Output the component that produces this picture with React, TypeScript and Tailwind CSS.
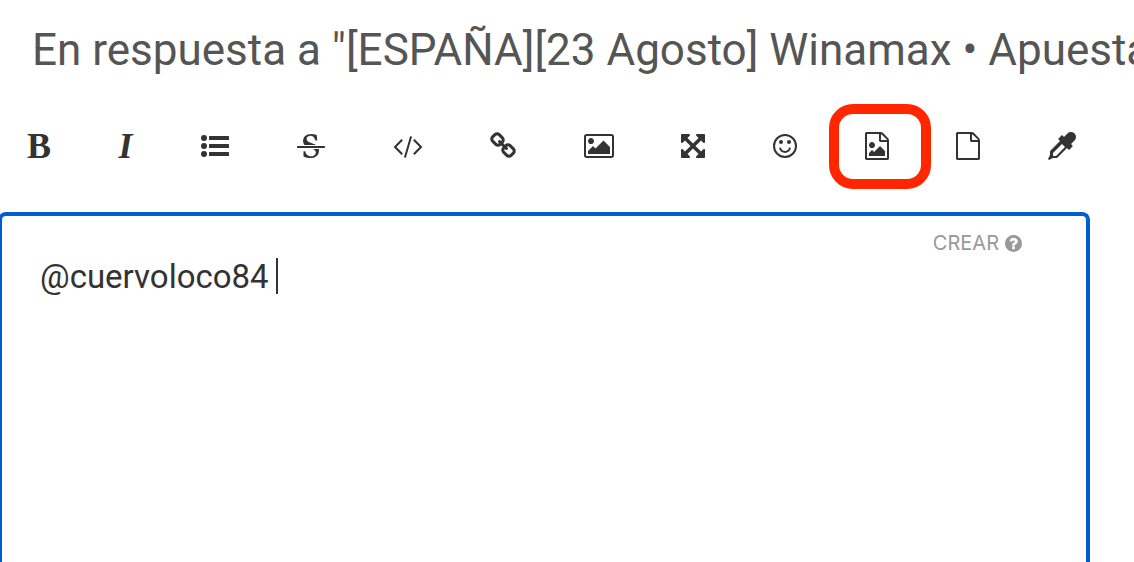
import { useState } from 'react';
import type { ReactNode } from 'react';

interface IconProps {
  viewBox: string;
  className: string;
  children: ReactNode;
}

interface Tool {
  id: string;
  label: string;
  icon: ReactNode;
  highlighted?: boolean;
}

function Icon({ viewBox, className, children }: IconProps) {
  return (
    <svg
      viewBox={viewBox}
      className={className}
      fill="currentColor"
      aria-hidden="true"
    >
      {children}
    </svg>
  );
}

const filePath =
  'M1596 380q28 28 48 76t20 88v1152q0 40-28 68t-68 28h-1344q-40 0-68-28t-28-68v-1600q0-40 28-68t68-28h896q40 0 88 20t76 48zm-444-244v376h376q-10-29-22-41l-313-313q-12-12-41-22zm384 1528v-1024h-416q-40 0-68-28t-28-68v-416h-768v1536h1280z';

const tools: Tool[] = [
  {
    id: 'bold',
    label: 'Negrita',
    icon: (
      <span className="w-[22px] flex justify-center font-bold">B</span>
    ),
  },
  {
    id: 'italic',
    label: 'Cursiva',
    icon: (
      <span className="w-4 flex justify-center font-bold italic">I</span>
    ),
  },
  {
    id: 'list',
    label: 'Lista',
    icon: (
      <Icon viewBox="0 0 28 28" className="w-7 h-7">
        <circle cx="3" cy="6" r="3" />
        <circle cx="3" cy="14" r="3" />
        <circle cx="3" cy="22" r="3" />
        <rect x="8" y="4" width="20" height="4" rx="0.5" />
        <rect x="8" y="12" width="20" height="4" rx="0.5" />
        <rect x="8" y="20" width="20" height="4" rx="0.5" />
      </Icon>
    ),
  },
  {
    id: 'strike',
    label: 'Tachado',
    icon: (
      <Icon viewBox="0 0 1792 1792" className="w-7 h-7">
        <path d="M1760 896q14 0 23 9t9 23v64q0 14-9 23t-23 9h-1728q-14 0-23-9t-9-23v-64q0-14 9-23t23-9h1728zm-1277-64q-28-35-51-80-48-97-48-188 0-181 134-309 133-127 393-127 50 0 167 19 66 12 177 48 10 38 21 118 14 123 14 183 0 18-5 45l-12 3-84-6-14-2q-50-149-103-205-88-91-210-91-114 0-182 59-67 58-67 146 0 73 66 140t279 129q69 20 173 66 58 28 95 52h-743zm507 256h411q7 39 7 92 0 111-41 212-23 55-71 104-37 35-109 81-80 48-153 66-80 21-203 21-114 0-195-23l-140-40q-57-16-72-28-8-8-8-22v-13q0-108-2-156-1-30 0-68l2-37v-44l102-2q15 34 30 71t22.5 56 12.5 27q35 57 80 94 43 36 105 57 59 22 132 22 64 0 139-27 77-26 122-86 47-61 47-129 0-84-81-157-34-29-137-71z" />
      </Icon>
    ),
  },
  {
    id: 'code',
    label: 'Código',
    icon: (
      <Icon viewBox="0 0 1920 1792" className="w-[30px] h-7">
        <path d="M617 1399l-50 50q-10 10-23 10t-23-10l-466-466q-10-10-10-23t10-23l466-466q10-10 23-10t23 10l50 50q10 10 10 23t-10 23l-393 393 393 393q10 10 10 23t-10 23zm591-1067l-373 1291q-4 13-15.5 19.5t-23.5 2.5l-62-17q-13-4-19.5-15.5t-2.5-24.5l373-1291q4-13 15.5-19.5t23.5-2.5l62 17q13 4 19.5 15.5t2.5 24.5zm657 651l-466 466q-10 10-23 10t-23-10l-50-50q-10-10-10-23t10-23l393-393-393-393q-10-10-10-23t10-23l50-50q10-10 23-10t23 10l466 466q10 10 10 23t-10 23z" />
      </Icon>
    ),
  },
  {
    id: 'link',
    label: 'Enlace',
    icon: (
      <Icon viewBox="64 0 1664 1792" className="w-[26px] h-7">
        <path d="M1520 1216q0-40-28-68l-208-208q-28-28-68-28-42 0-72 32 3 3 19 18.5t21.5 21.5 15 19 13 25.5 3.5 27.5q0 40-28 68t-68 28q-15 0-27.5-3.5t-25.5-13-19-15-21.5-21.5-18.5-19q-33 31-33 73 0 40 28 68l206 207q27 27 68 27 40 0 68-26l147-146q28-28 28-67zm-703-705q0-40-28-68l-206-207q-28-28-68-28-39 0-68 27l-147 146q-28 28-28 67 0 40 28 68l208 208q27 27 68 27 42 0 72-31-3-3-19-18.5t-21.5-21.5-15-19-13-25.5-3.5-27.5q0-40 28-68t68-28q15 0 27.5 3.5t25.5 13 19 15 21.5 21.5 18.5 19q33-31 33-73zm895 705q0 120-85 203l-147 146q-83 83-203 83-121 0-204-85l-206-207q-83-83-83-203 0-123 88-209l-88-88q-86 88-208 88-120 0-204-84l-208-208q-84-84-84-204t85-203l147-146q83-83 203-83 121 0 204 85l206 207q83 83 83 203 0 123-88 209l88 88q86-88 208-88 120 0 204 84l208 208q84 84 84 204z" />
      </Icon>
    ),
  },
  {
    id: 'picture',
    label: 'Imagen',
    icon: (
      <Icon viewBox="64 0 1920 1792" className="w-[30px] h-7">
        <path d="M704 576q0 80-56 136t-136 56-136-56-56-136 56-136 136-56 136 56 56 136zm1024 384v448h-1408v-192l320-320 160 160 512-512zm96-704h-1600q-13 0-22.5 9.5t-9.5 22.5v1216q0 13 9.5 22.5t22.5 9.5h1600q13 0 22.5-9.5t9.5-22.5v-1216q0-13-9.5-22.5t-22.5-9.5zm160 32v1216q0 66-47 113t-113 47h-1600q-66 0-113-47t-47-113v-1216q0-66 47-113t113-47h1600q66 0 113 47t47 113z" />
      </Icon>
    ),
  },
  {
    id: 'expand',
    label: 'Pantalla completa',
    icon: (
      <Icon viewBox="128 0 1536 1792" className="w-6 h-7">
        <path d="M1411 541l-355 355 355 355 144-144q29-31 70-14 39 17 39 59v448q0 26-19 45t-45 19h-448q-42 0-59-40-17-39 14-69l144-144-355-355-355 355 144 144q31 30 14 69-17 40-59 40h-448q-26 0-45-19t-19-45v-448q0-42 40-59 39-17 69 14l144 144 355-355-355-355-144 144q-19 19-45 19-12 0-24-5-40-17-40-59v-448q0-26 19-45t45-19h448q42 0 59 40 17 39-14 69l-144 144 355 355 355-355-144-144q-31-30-14-69 17-40 59-40h448q26 0 45 19t19 45v448q0 42-39 59-13 5-25 5-26 0-45-19z" />
      </Icon>
    ),
  },
  {
    id: 'smile',
    label: 'Emoticonos',
    icon: (
      <Icon viewBox="128 0 1536 1792" className="w-6 h-7">
        <circle
          cx="896"
          cy="896"
          r="704"
          fill="none"
          stroke="currentColor"
          strokeWidth="128"
        />
        <circle cx="640" cy="640" r="128" />
        <circle cx="1152" cy="640" r="128" />
        <path d="M1262 1075q-37 121-138 195t-228 74-228-74-138-195q-8-25 4-48.5t38-31.5q25-8 48.5 4t31.5 38q25 80 92.5 129.5t151.5 49.5 151.5-49.5 92.5-129.5q8-26 32-38t49-4 37 31.5 4 48.5z" />
      </Icon>
    ),
  },
  {
    id: 'file-image',
    label: 'Subir imagen',
    highlighted: true,
    icon: (
      <Icon viewBox="128 0 1536 1792" className="w-6 h-7">
        <path d={filePath} />
        <path d="M1408 1216v320h-1024v-192l192-192 128 128 384-384zM576 1024q-80 0-136-56t-56-136 56-136 136-56 136 56 56 136-56 136-136 56z" />
      </Icon>
    ),
  },
  {
    id: 'file',
    label: 'Adjuntar archivo',
    icon: (
      <Icon viewBox="128 0 1536 1792" className="w-6 h-7">
        <path d={filePath} />
      </Icon>
    ),
  },
  {
    id: 'color',
    label: 'Color',
    icon: (
      <Icon viewBox="0 0 1792 1792" className="w-7 h-7">
        <path d="M1698 94q94 94 94 226.5t-94 225.5l-225 223 104 104q10 10 10 23t-10 23l-210 210q-10 10-23 10t-23-10l-105-105-603 603q-37 37-90 37h-203l-256 128-64-64 128-256v-203q0-53 37-90l603-603-105-105q-10-10-10-23t10-23l210-210q10-10 23-10t23 10l104 104 223-225q93-94 225.5-94t226.5 94zm-1186 1442l576-576-192-192-576 576v192h192z" />
      </Icon>
    ),
  },
];

function Toolbar() {
  return (
    <div
      role="toolbar"
      aria-label="Formato"
      className="flex items-center justify-between h-7 pl-7 pr-[58px]"
    >
      {tools.map((tool) => (
        <button
          key={tool.id}
          type="button"
          aria-label={tool.label}
          className="relative flex items-center justify-center h-7 shrink-0 font-['Liberation_Serif',serif] text-[36px] leading-7"
        >
          {tool.icon}
          {tool.highlighted && (
            <span className="absolute -left-9 -top-7 w-[102px] h-[85px] rounded-3xl border-10 border-[#ff2600] pointer-events-none" />
          )}
        </button>
      ))}
    </div>
  );
}

function Editor() {
  const [text, setText] = useState('@cuervoloco84 ');

  return (
    <div className="relative flex flex-col grow -ml-0.5 mr-11 border-4 border-b-0 border-[#005fd0] rounded-t-lg">
      <div className="flex justify-end pt-[13px] pr-16">
        <button
          type="button"
          className="flex items-center gap-1.5 text-xl leading-7 text-[#999999] font-[Inter,sans-serif]"
        >
          CREAR
          <Icon viewBox="128 128 1536 1536" className="w-[17px] h-[17px]">
            <path d="M1024 1376v-192q0-14-9-23t-23-9h-192q-14 0-23 9t-9 23v192q0 14 9 23t23 9h192q14 0 23-9t9-23zm256-672q0-88-55.5-163t-138.5-116-170-41q-243 0-371 213-15 24 8 42l132 100q7 6 19 6 16 0 25-12 53-68 86-92 34-24 86-24 48 0 85.5 26t37.5 59q0 38-20 61t-68 45q-63 28-115.5 86.5t-52.5 125.5v36q0 14 9 23t23 9h192q14 0 23-9t9-23q0-19 21.5-49.5t54.5-49.5q32-18 49-28.5t46-35 44.5-48 28-60.5 12.5-81zm384 192q0 209-103 385.5t-279.5 279.5-385.5 103-385.5-103-279.5-279.5-103-385.5 103-385.5 279.5-279.5 385.5-103 385.5 103 279.5 279.5 103 385.5z" />
          </Icon>
        </button>
      </div>
      <textarea
        aria-label="Mensaje"
        value={text}
        onChange={(e) => setText(e.target.value)}
        className="grow w-full pl-[38px] pr-10 text-[33px] leading-10 resize-none outline-none caret-transparent"
      />
      {/* Text cursor */}
      <span className="absolute left-[274px] top-[42px] w-0.5 h-9 bg-[#333333]" />
    </div>
  );
}

export default function App() {
  return (
    <main className="flex flex-col min-h-screen overflow-hidden bg-white text-[#333333] font-[Roboto,sans-serif]">
      <h1 className="pl-8 pt-5 text-[44px] leading-[60px] text-[#555555] whitespace-nowrap overflow-hidden">
        En respuesta a "[ESPAÑA][23 Agosto] Winamax • Apuesta
      </h1>
      <div className="pt-[52px] pb-[52px]">
        <Toolbar />
      </div>
      <Editor />
    </main>
  );
}
